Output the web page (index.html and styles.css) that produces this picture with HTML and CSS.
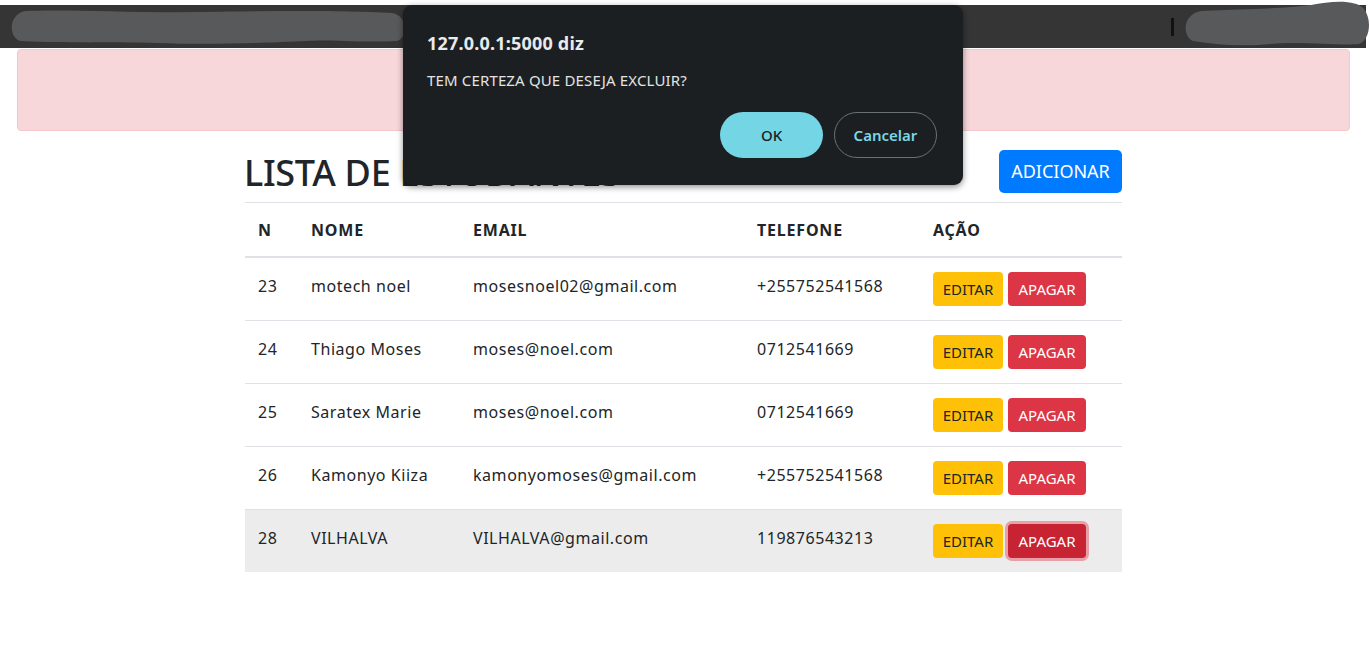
FILE: index.html
```html
<!DOCTYPE html>
<html lang="pt">
<head>
<meta charset="utf-8">
<title>Lista de Estudantes</title>
<link rel="stylesheet" href="styles.css">
</head>
<body>
<div class="topbar">
  <span class="caret"></span>
</div>
<svg class="scribble scribble-left" width="400" height="40" viewBox="0 0 400 40">
  <path d="M18 4 C60 2 120 6 200 5 C260 4 330 3 385 6 C400 8 402 30 390 34 C350 36 320 32 300 34 C260 36 200 38 150 36 C100 35 40 36 14 34 C2 32 0 8 18 4 Z" fill="#58595b"/>
</svg>
<svg class="scribble scribble-right" width="190" height="46" viewBox="0 0 190 46">
  <path d="M20 10 C60 8 100 8 130 4 C150 0 175 -2 183 8 C192 20 188 40 178 43 C160 45 120 40 90 43 C60 46 30 43 12 40 C2 36 0 14 20 10 Z" fill="#58595b"/>
</svg>

<div class="alert"></div>

<main class="container">
  <div class="heading-row">
    <h1 class="title">LISTA DE ESTUDANTES</h1>
    <button class="btn btn-primary btn-lg">ADICIONAR</button>
  </div>
  <table class="table">
    <thead>
      <tr>
        <th class="c-n">N</th>
        <th class="c-nome">NOME</th>
        <th class="c-email">EMAIL</th>
        <th class="c-tel">TELEFONE</th>
        <th class="c-acao">AÇÃO</th>
      </tr>
    </thead>
    <tbody>
      <tr>
        <td>23</td><td>motech noel</td><td>mosesnoel02@gmail.com</td><td>+255752541568</td>
        <td class="actions"><button class="btn btn-warning">EDITAR</button><button class="btn btn-danger">APAGAR</button></td>
      </tr>
      <tr>
        <td>24</td><td>Thiago Moses</td><td>moses@noel.com</td><td>0712541669</td>
        <td class="actions"><button class="btn btn-warning">EDITAR</button><button class="btn btn-danger">APAGAR</button></td>
      </tr>
      <tr>
        <td>25</td><td>Saratex Marie</td><td>moses@noel.com</td><td>0712541669</td>
        <td class="actions"><button class="btn btn-warning">EDITAR</button><button class="btn btn-danger">APAGAR</button></td>
      </tr>
      <tr>
        <td>26</td><td>Kamonyo Kiiza</td><td>kamonyomoses@gmail.com</td><td>+255752541568</td>
        <td class="actions"><button class="btn btn-warning">EDITAR</button><button class="btn btn-danger">APAGAR</button></td>
      </tr>
      <tr class="hover">
        <td>28</td><td>VILHALVA</td><td>VILHALVA@gmail.com</td><td>119876543213</td>
        <td class="actions"><button class="btn btn-warning">EDITAR</button><button class="btn btn-danger focus">APAGAR</button></td>
      </tr>
    </tbody>
  </table>
</main>

<div class="dialog" role="dialog">
  <div class="dialog-title">127.0.0.1:5000 diz</div>
  <div class="dialog-msg">TEM CERTEZA QUE DESEJA EXCLUIR?</div>
  <div class="dialog-actions">
    <button class="dbtn dbtn-ok">OK</button>
    <button class="dbtn dbtn-cancel">Cancelar</button>
  </div>
</div>
</body>
</html>
```

FILE: styles.css
```css
* { box-sizing: border-box; }
html, body { margin: 0; padding: 0; }
body {
  font-family: "Noto Sans", "Open Sans", sans-serif;
  font-size: 16px;
  line-height: 1.5;
  color: #212529;
  background: #fff;
  padding-top: 5px;
}

.topbar {
  height: 43px;
  margin-right: 4px;
  background: #353535;
  display: flex;
  justify-content: flex-end;
  align-items: center;
  padding-right: 192px;
}
.caret {
  display: block;
  width: 3px;
  height: 18px;
  background: #111;
}
.scribble { position: absolute; }
.scribble-left { left: 7px; top: 7px; }
.scribble-right { left: 1181px; top: 1px; }

.alert {
  margin: 1px 20px 0 17px;
  height: 82px;
  background: #f8d7da;
  border: 1px solid #f5c6cb;
  border-radius: 4px;
}

.container {
  width: 877px;
  margin-left: calc(50% - 440px);
  padding-top: 18px;
}
.heading-row {
  display: flex;
  justify-content: space-between;
  align-items: center;
  height: 44px;
  margin-bottom: 9px;
}
.title {
  margin: 0;
  margin-left: -1px;
  font-size: 36px;
  font-weight: 500;
  line-height: 1.2;
  color: #212529;
  letter-spacing: -0.3px;
  position: relative;
  top: 2px;
}

.btn {
  font-family: inherit;
  border: 1px solid transparent;
  border-radius: 4px;
  cursor: pointer;
  padding: 0 10px;
  font-size: 15px;
  line-height: 1;
  height: 34px;
}
.btn-lg {
  height: 43px;
  width: 123px;
  padding: 0;
  font-size: 18px;
  border-radius: 5px;
}
.btn-primary { background: #007bff; color: #fff; }
.btn-warning { background: #ffc107; color: #212529; width: 70px; padding: 0; }
.btn-danger { background: #dc3545; color: #fff; width: 78px; padding: 0; margin-left: 5px; }
.btn-danger.focus {
  background: #c82333;
  box-shadow: 0 0 0 3px rgba(225, 83, 97, .5);
}

.table {
  width: 877px;
  border-collapse: collapse;
}
.table th, .table td {
  text-align: left;
  vertical-align: middle;
  border-top: 1px solid #dee2e6;
}
.table th {
  font-weight: 700;
  letter-spacing: 0.8px;
  border-bottom: 2px solid #dee2e6;
  padding: 15px 12px 14px 13px;
}
.table td {
  padding: 11px 12px 17px 13px;
  height: 63px;
  letter-spacing: 0.55px;
}
.table td.actions {
  padding: 14px 12px 14px 14px;
  letter-spacing: 0;
  white-space: nowrap;
}
.table th.c-acao { padding-left: 14px; }
.c-n { width: 53px; }
.c-nome { width: 162px; }
.c-email { width: 284px; }
.c-tel { width: 175px; }
.c-acao { width: 203px; }
.table tr.hover td { background: #ececec; height: 61px; }

.dialog {
  position: absolute;
  left: 403px;
  top: 5px;
  width: 560px;
  height: 180px;
  background: #1b1f21;
  border-radius: 9px;
  box-shadow: 0 2px 6px rgba(0,0,0,.45);
  padding: 26px 26px 27px 24px;
  color: #e8eaed;
  font-family: "Noto Sans", "Open Sans", sans-serif;
}
.dialog-title {
  font-size: 18px;
  font-weight: 700;
  line-height: 24px;
  letter-spacing: 0.2px;
}
.dialog-msg {
  margin-top: 15px;
  font-size: 15px;
  line-height: 20px;
  letter-spacing: 0.15px;
  color: #e3e3e3;
}
.dialog-actions {
  display: flex;
  justify-content: flex-end;
  gap: 11px;
  margin-top: 22px;
}
.dbtn {
  font-family: inherit;
  width: 103px;
  height: 46px;
  border-radius: 23px;
  font-size: 15px;
  font-weight: 600;
  cursor: pointer;
}
.dbtn-ok {
  background: #74d5e5;
  color: #1b1f21;
  border: none;
  font-weight: 500;
}
.dbtn-cancel {
  background: transparent;
  color: #7bd6e7;
  border: 1px solid #687276;
}
```
